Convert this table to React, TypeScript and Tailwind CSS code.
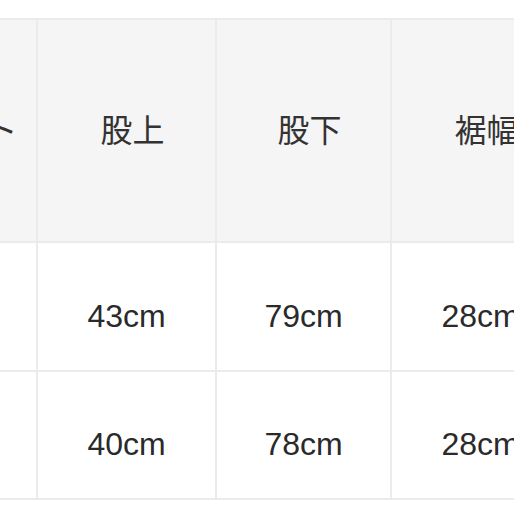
export default function App() {
  const headers = ["ウエスト", "股上", "股下", "裾幅", "ヒップ"];
  const rows = [
    ["36cm", "43cm", "79cm", "28cm", "50cm"],
    ["35cm", "40cm", "78cm", "28cm", "49cm"],
  ];
  const font = { fontFamily: '"Liberation Sans", "Noto Sans CJK JP", sans-serif' };
  return (
    <div className="w-[514px] h-[514px] overflow-hidden bg-white pt-[18px]" style={font}>
      <div className="grid w-max ml-[-143px] p-[2px] gap-[2px] bg-[#ebebeb] grid-cols-[177px_177px_173px_177px_177px] grid-rows-[221px_127px_126px]">
        {headers.map((h) => (
          <div key={h} className="bg-[#f5f5f5] flex items-center justify-center pl-3 text-[32px] text-[#333333]">
            {h}
          </div>
        ))}
        {rows.map((r, i) =>
          r.map((c, j) => (
            <div key={`${i}-${j}`} className="bg-white flex items-center justify-center pt-[18px] text-[32px] text-[#2a2a2a]">
              {c}
            </div>
          ))
        )}
      </div>
    </div>
  );
}
